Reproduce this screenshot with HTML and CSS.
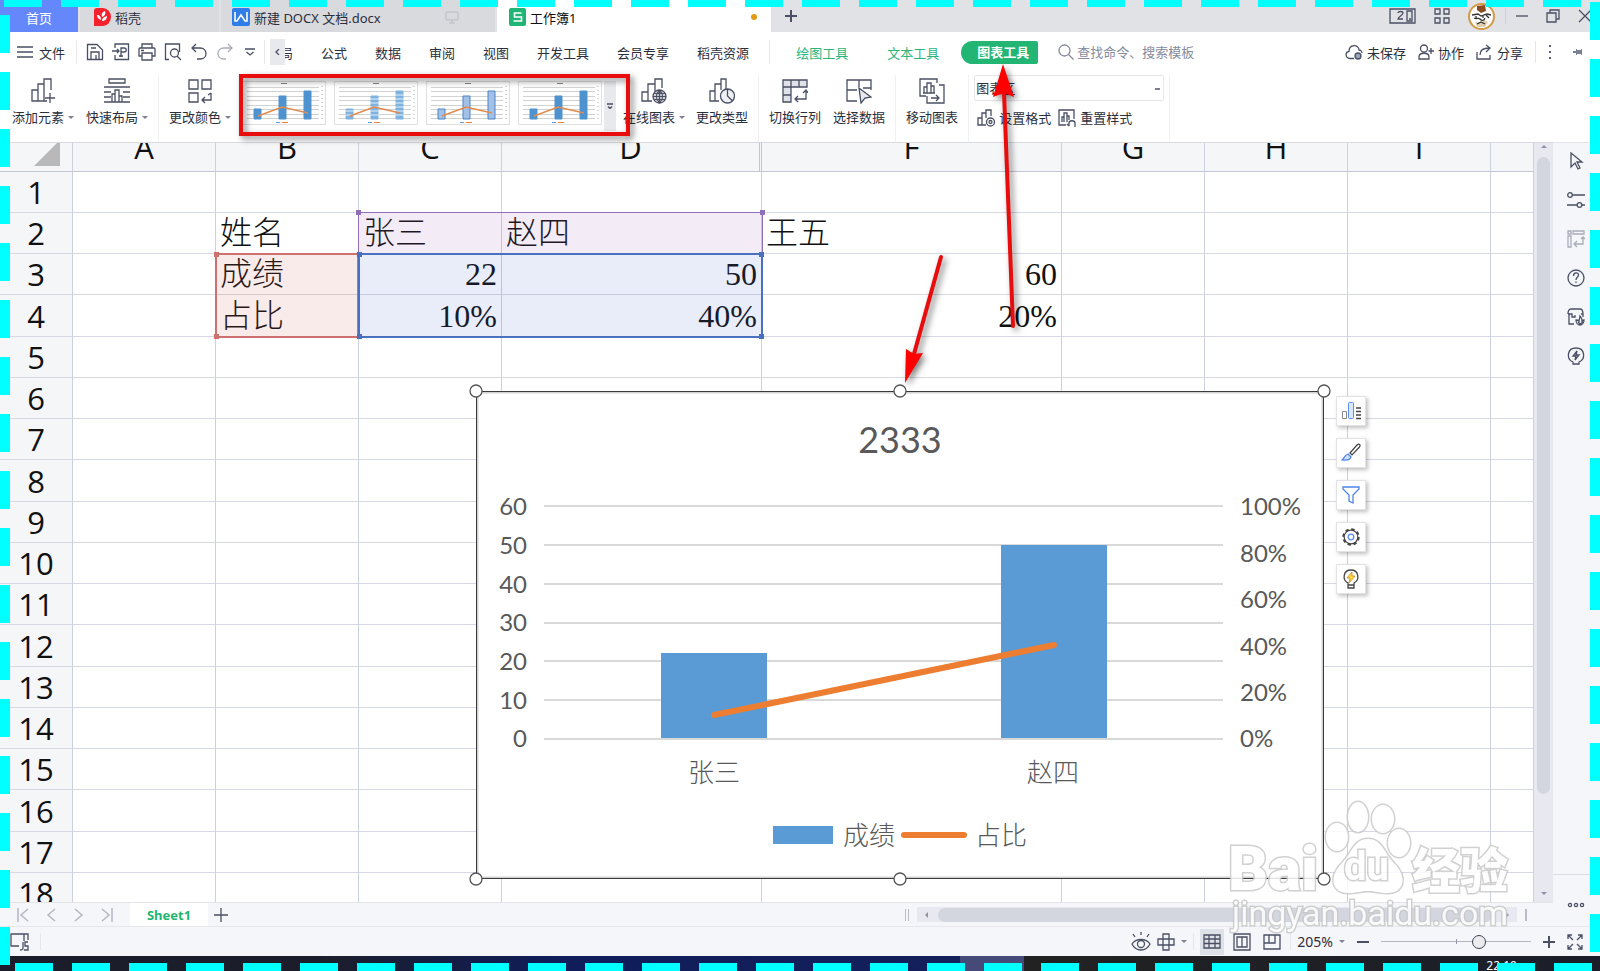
FILE: index.html
```
<!DOCTYPE html>
<html lang="zh-CN">
<head>
  <meta charset="UTF-8" />
  <meta name="viewport" content="width=device-width, initial-scale=1.0" />
  <title>工作簿1</title>
  <link rel="stylesheet" href="styles.css">
</head>
<body>
  <!-- Fönsterflikar -->
  <header class="titlebar">
    <button class="tab home">首页</button>
    <button class="tab docer">
      <svg width="17" height="18" viewBox="0 0 17 18"><path fill="#f5222d" d="M3 0h6a8 9 0 0 1 0 18H0V3a3 3 0 0 1 3-3z"/><path fill="#fff" d="M8 9C7 6 8 4 11 3c1 3 0 5-3 6zM7 12C4 11 3 9 3 7c3 0 4 2 4 5zM8 13c0-3 2-4 5-5 0 3-2 5-5 5z"/></svg>
      稻壳
    </button>
    <button class="tab doc">
      <svg width="18" height="18" viewBox="0 0 18 18"><rect width="18" height="18" rx="2" fill="#2f7de9"/><path fill="none" stroke="#fff" stroke-width="1.6" d="M3 4v9h2l4-6 4 6h2V4"/></svg>
      新建 DOCX 文档.docx
      <svg class="monitor" width="14" height="14" viewBox="0 0 14 14"><path fill="none" stroke="#b9bcc8" d="M1 2h12v8H1zM7 10v3M4 13h6"/></svg>
    </button>
    <button class="tab active">
      <svg width="17" height="18" viewBox="0 0 17 18"><rect width="17" height="18" rx="2" fill="#1fb574"/><path fill="none" stroke="#fff" stroke-width="1.6" d="M12.500 5H5.500v4h7v4h-8"/></svg>
      工作簿1
      <span class="unsaved"></span>
    </button>
    <button class="new-tab" aria-label="新建"><svg class="ic" width="14" height="14" viewBox="0 0 14 14"><path stroke-width="2" d="M7 1v12M1 7h12"/></svg></button>
    <div class="window-tools">
      <button aria-label="窗口"><svg class="ic" width="27" height="16" viewBox="0 0 27 16"><path d="M1 1h25v14H1zM18 3h5v10h-5zM20 11h2M9 5c0-2 5-2 5 0s-5 4-5 6h5"/></svg></button>
      <button aria-label="应用"><svg class="ic" width="16" height="16" viewBox="0 0 16 16"><path d="M1 1h5v5H1zM10 1h5v5h-5zM1 10h5v5H1zM10 10h5v5h-5z"/></svg></button>
      <button aria-label="账户"><svg width="27" height="27" viewBox="0 0 27 27"><circle cx="13.500" cy="13.500" r="12.500" fill="#fff" stroke="#d29a45" stroke-width="2"/><path fill="#8a4a22" d="M9 3l8-1 1 6-5 2-4-3z"/><path fill="#e2cfae" d="M7 19l6 1 3-3 4 2-3 5H9z"/><path fill="none" stroke="#333" stroke-width="1.300" d="M4 12l6-1 3 2 6-2 4 1M6 15c3 2 4-1 6 1s4 2 5-1M9 21l4-2 4 2M18 12l3 3M8 13v2M15 13v2"/></svg></button>
      <span class="sep"></span>
      <button aria-label="最小化"><svg class="ic" width="12" height="12" viewBox="0 0 12 12"><path d="M0 6h12"/></svg></button>
      <button aria-label="还原"><svg class="ic" width="14" height="14" viewBox="0 0 14 14"><path d="M1 4h9v9H1zM4 4V1h9v9h-3"/></svg></button>
      <button aria-label="关闭"><svg class="ic" width="14" height="14" viewBox="0 0 14 14"><path d="M1 1l12 12M13 1L1 13"/></svg></button>
    </div>
  </header>

  <!-- Menyrad -->
  <nav class="menubar">
    <button class="file"><svg class="ic" width="16" height="12" viewBox="0 0 16 12"><path d="M0 1h16M0 6h16M0 11h16"/></svg>文件</button>
    <span class="sep"></span>
    <div class="quick">
      <button aria-label="保存"><svg class="ic" width="18" height="18" viewBox="0 0 18 18"><path d="M2 1.500h9l5.500 5.500v9.500H1.500v-15zM5 16V9h8v7M5 5h5M10 12v4"/></svg></button>
      <button aria-label="输出为PDF"><svg class="ic" width="18" height="18" viewBox="0 0 18 18"><path d="M3 5V1h13.500v15.500H3V12M0 8h7M5 6l2 2-2 2M9 14V5h3c3 0 3 4 0 4H9M7 13h4"/></svg></button>
      <button aria-label="打印"><svg class="ic" width="18" height="18" viewBox="0 0 18 18"><path d="M4 5V1h10v4M4 13H1V6c0-1 0-1 1-1h14c1 0 1 0 1 1v7h-3M4 10h10v7H4zM3 7.500h3"/></svg></button>
      <button aria-label="打印预览"><svg class="ic" width="18" height="18" viewBox="0 0 18 18"><path d="M5 16.500H1.500V1h14v8M13 13l4 4"/><circle cx="10.500" cy="10" r="4"/></svg></button>
      <button aria-label="撤销"><svg class="ic" width="18" height="18" viewBox="0 0 18 18"><path d="M6 1L2 5l4 4M2 5h8c8 0 8 11 0 11H7"/></svg></button>
      <button aria-label="恢复"><svg class="ic pale" width="18" height="18" viewBox="0 0 18 18"><path d="M12 1l4 4-4 4M16 5H8c-8 0-8 11 0 11h2"/></svg></button>
      <button class="quick-more" aria-label="更多"><svg class="ic" width="10" height="10" viewBox="0 0 10 10"><path d="M0 2h10M1.500 5L5 8l3.500-3"/></svg></button>
    </div>
    <span class="sep"></span>
    <button class="scroll-left" aria-label="向左"><svg class="ic" width="6" height="6" viewBox="0 0 6 6"><path d="M4 0L1 3l3 3"/></svg></button>
    <div class="menus">
      <a class="cut" href="#"><span>布局</span></a>
      <a href="#">公式</a>
      <a href="#">数据</a>
      <a href="#">审阅</a>
      <a href="#">视图</a>
      <a href="#">开发工具</a>
      <a href="#">会员专享</a>
      <a href="#">稻壳资源</a>
    </div>
    <span class="sep"></span>
    <div class="context-menus">
      <a href="#">绘图工具</a>
      <a href="#">文本工具</a>
      <a class="current" href="#">图表工具</a>
    </div>
    <label class="search">
      <svg class="ic" width="16" height="16" viewBox="0 0 16 16"><circle cx="6.500" cy="6.500" r="5.500"/><path d="M10.500 10.500l5 5"/></svg>
      <input type="text" placeholder="查找命令、搜索模板" aria-label="查找命令、搜索模板">
    </label>
    <div class="share">
      <button><svg class="ic" width="18" height="16" viewBox="0 0 18 16"><path d="M9 14.500H5C0 14 0 8 4 7.500 4 0 14 0 14 6c2 0 3 2 3 3"/><circle cx="13" cy="12" r="3" fill="#9aa3b8"/></svg>未保存</button>
      <button><svg class="ic" width="16" height="16" viewBox="0 0 16 16"><circle cx="6" cy="4.500" r="3.500"/><path d="M1 15v-2c0-5 10-5 10 0v2zM13 4v6M10.500 7H16"/></svg>协作</button>
      <button><svg class="ic" width="17" height="16" viewBox="0 0 17 16"><path d="M1 8v7h13v-4M4 11c0-5 3-7 9-7M10 1l4 3-4 4"/></svg>分享</button>
      <span class="sep"></span>
      <button aria-label="更多"><svg width="4" height="14" viewBox="0 0 4 14" fill="#5b6073"><path d="M1 0h2v2H1zM1 6h2v2H1zM1 12h2v2H1z"/></svg></button>
      <button aria-label="固定"><svg width="10" height="8" viewBox="0 0 10 8" fill="#7c8091"><path d="M0 3h3V1h1v1h4V1h1v6H8V6H4v1H3V5H0z"/></svg></button>
    </div>
  </nav>

  <!-- Verktygsfält -->
  <section class="ribbon">
    <button class="tool"><svg class="ic" width="26" height="26" viewBox="0 0 26 26"><path d="M17 23H2V12h6v11M8 12V6h6v17M14 6V1h7v11M20 15v10M15 20h10"/></svg><span class="drop">添加元素</span></button>
    <button class="tool gap"><svg class="ic" width="26" height="26" viewBox="0 0 26 26"><path d="M5 1h16v4H5zM0 9h26M0 14h7M19 14h7M0 19h7M19 19h7M0 24h26M8 24v-8h3v8M11 24V12h4v12M15 24v-6h3v6"/></svg><span class="drop">快速布局</span></button>
    <span class="sep"></span>
    <button class="tool"><svg class="ic" width="26" height="26" viewBox="0 0 26 26"><path d="M2 2h9v9H2zM15 2h9v9h-9zM2 15h9v9H2zM24 15v7h-9M18 19l-3 3 3 3M21 17l3-2"/></svg><span class="drop">更改颜色</span></button>

    <svg class="defs">
      <symbol id="thumb" viewBox="0 0 84 44">
        <rect x=".5" y=".5" width="83" height="43" fill="#fff" stroke="#e0e0e3"/>
        <path stroke="#d2d2d2" d="M5 6.500h72M5 10.500h72M5 15.500h72M5 19.500h72M5 24.500h72M5 28.500h72M5 33.500h72M5 37.500h72"/>
        <path stroke="#aaa" stroke-dasharray="1 3" d="M80 5v34"/>
        <path stroke="#888" d="M39 2.500h6"/>
        <path class="bars" d="M12 28h7v10h-7zM37 15h7v23h-7zM62 10h7v28h-7z"/>
        <path class="stripes" d="M11 30h9M11 34h9M36 18h9M36 22h9M36 26h9M36 30h9M36 34h9M61 14h9M61 18h9M61 22h9M61 26h9M61 30h9M61 34h9"/>
        <path fill="none" stroke="#e28b4f" stroke-width="1.500" d="M16 35l24-9 26 6"/>
        <path stroke="#5b9bd5" d="M34 41.500h4"/><path stroke="#ed7d31" d="M40 41.500h6"/>
      </symbol>
    </svg>
    <div class="gallery">
      <button aria-label="样式 1"><svg class="s1" width="84" height="44"><use href="#thumb"/></svg></button>
      <button aria-label="样式 2"><svg class="s2" width="84" height="44"><use href="#thumb"/></svg></button>
      <button aria-label="样式 3"><svg class="s3" width="84" height="44"><use href="#thumb"/></svg></button>
      <button aria-label="样式 4"><svg class="s1" width="84" height="44"><use href="#thumb"/></svg></button>
      <button class="more" aria-label="更多样式"><svg class="ic" width="6" height="6" viewBox="0 0 6 6"><path d="M0 1h6M1 3.500l2 2 2-2"/></svg></button>
    </div>

    <button class="tool online"><svg class="ic" width="26" height="26" viewBox="0 0 26 26"><path d="M11 23H1V14h6v9M7 14V6h7v8M14 6V1h7v9"/><circle cx="18.500" cy="18.500" r="6.500"/><path d="M12 18.500h13M18.500 12v13M18.500 12c-4 4-4 9 0 13M18.500 12c4 4 4 9 0 13M13 15.500h11M13 21.500h11"/></svg><span class="drop">在线图表</span></button>
    <button class="tool type"><svg class="ic" width="26" height="26" viewBox="0 0 26 26"><path d="M10 23H1V13h5v10M6 13V6h6v6M12 6V1h5v10"/><circle cx="18.500" cy="18" r="7" fill="#eef0f3"/><path d="M18.500 11v7l5 5"/></svg><span>更改类型</span></button>
    <span class="sep"></span>
    <button class="tool near"><svg class="ic" width="26" height="26" viewBox="0 0 26 26"><path fill="#dfe2e8" d="M1 2h24v7H9v15H1z"/><path d="M9 2v7M17 2v7M1 9h8M1 17h8M24 12v9H13M16 18l-3 3 3 3M21 15l3-3 2 3"/></svg><span>切换行列</span></button>
    <button class="tool gap"><svg class="ic" width="26" height="26" viewBox="0 0 26 26"><path d="M11 23H1V2h24v10M1 12h10M13 2v7M17 10h8"/><path fill="#e6e8ec" d="M13 10l12 9-6 1-4 5z"/></svg><span>选择数据</span></button>
    <span class="sep"></span>
    <button class="tool near"><svg class="ic" width="26" height="26" viewBox="0 0 26 26"><path d="M7 18H1V1h17v4M20 7h5v18H8v-7"/><path d="M5 15V9h3v6M8 15V5h4v10M12 15V8h3v7M4 15h12M12 20h8M17 17l3 3-3 3"/></svg><span>移动图表</span></button>
    <span class="sep"></span>
    <div class="format">
      <select aria-label="图表元素"><option>图表区</option></select>
      <div class="format-row">
        <button><svg class="ic" width="18" height="18" viewBox="0 0 18 18"><path d="M9 16H1V9h4v7M5 9V4h4v5M9 4V1h5v6"/><circle cx="13.500" cy="13" r="4"/><circle cx="13.500" cy="13" r="1.500"/></svg>设置格式</button>
        <button><svg class="ic" width="18" height="18" viewBox="0 0 18 18"><path d="M8 16H1V1h15v9M4 13V8h2v5M6 13V4h3v9M9 13V7h2v4M11 17v-3c0-3 6-3 6 0v4M9 15l2 2"/></svg>重置样式</button>
      </div>
    </div>
    <span class="sep"></span>
  </section>

  <main class="workspace">
    <div class="book">
      <div class="sheet-area">
        <div class="sheet">
          <table class="grid">
            <colgroup><col class="nums"><col class="std"><col class="std"><col class="std"><col class="wide-d"><col class="wide-f"><col class="std"><col class="std"><col class="std"><col></colgroup>
            <thead>
              <tr><th class="corner"><i></i></th><th>A</th><th>B</th><th>C</th><th class="before-hidden">D</th><th>F</th><th>G</th><th>H</th><th>I</th><th></th></tr>
            </thead>
            <tbody>
              <tr><th>1</th><td></td><td></td><td></td><td></td><td></td><td></td><td></td><td></td><td></td></tr>
              <tr><th>2</th><td></td><td>姓名</td><td>张三</td><td>赵四</td><td>王五</td><td></td><td></td><td></td><td></td></tr>
              <tr><th>3</th><td></td><td>成绩</td><td class="num">22</td><td class="num">50</td><td class="num">60</td><td></td><td></td><td></td><td></td></tr>
              <tr><th>4</th><td></td><td>占比</td><td class="num">10%</td><td class="num">40%</td><td class="num">20%</td><td></td><td></td><td></td><td></td></tr>
              <tr><th>5</th><td></td><td></td><td></td><td></td><td></td><td></td><td></td><td></td><td></td></tr>
              <tr><th>6</th><td></td><td></td><td></td><td></td><td></td><td></td><td></td><td></td><td></td></tr>
              <tr><th>7</th><td></td><td></td><td></td><td></td><td></td><td></td><td></td><td></td><td></td></tr>
              <tr><th>8</th><td></td><td></td><td></td><td></td><td></td><td></td><td></td><td></td><td></td></tr>
              <tr><th>9</th><td></td><td></td><td></td><td></td><td></td><td></td><td></td><td></td><td></td></tr>
              <tr><th>10</th><td></td><td></td><td></td><td></td><td></td><td></td><td></td><td></td><td></td></tr>
              <tr><th>11</th><td></td><td></td><td></td><td></td><td></td><td></td><td></td><td></td><td></td></tr>
              <tr><th>12</th><td></td><td></td><td></td><td></td><td></td><td></td><td></td><td></td><td></td></tr>
              <tr><th>13</th><td></td><td></td><td></td><td></td><td></td><td></td><td></td><td></td><td></td></tr>
              <tr><th>14</th><td></td><td></td><td></td><td></td><td></td><td></td><td></td><td></td><td></td></tr>
              <tr><th>15</th><td></td><td></td><td></td><td></td><td></td><td></td><td></td><td></td><td></td></tr>
              <tr><th>16</th><td></td><td></td><td></td><td></td><td></td><td></td><td></td><td></td><td></td></tr>
              <tr><th>17</th><td></td><td></td><td></td><td></td><td></td><td></td><td></td><td></td><td></td></tr>
              <tr><th>18</th><td></td><td></td><td></td><td></td><td></td><td></td><td></td><td></td><td></td></tr>
            </tbody>
          </table>

          <!-- Markerade dataområden -->
          <div class="range names"><i></i><i></i></div>
          <div class="range labels"><i></i><i></i></div>
          <div class="range values"><i></i><i></i><i></i><i></i></div>

          <!-- Diagram -->
          <svg class="chart" width="864" height="504" viewBox="-8 -8 864 504">
            <rect width="848" height="488" fill="#fff"/>
            <rect x="1.500" y="1.500" width="845" height="485" fill="none" stroke="#d2d2d2" stroke-width="2"/>
            <rect x=".5" y=".5" width="847" height="487" fill="none" stroke="#3a3a3a"/>
            <text class="chart-title" x="424" y="62" text-anchor="middle">2333</text>
            <path stroke="#d9d9d9" stroke-width="2" d="M68 115h679M68 154h679M68 193h679M68 232h679M68 270h679M68 309h679M68 348h679"/>
            <g text-anchor="end">
              <text x="51" y="124">60</text>
              <text x="51" y="163">50</text>
              <text x="51" y="202">40</text>
              <text x="51" y="240">30</text>
              <text x="51" y="279">20</text>
              <text x="51" y="318">10</text>
              <text x="51" y="356">0</text>
            </g>
            <g>
              <text x="764" y="124">100%</text>
              <text x="764" y="171">80%</text>
              <text x="764" y="217">60%</text>
              <text x="764" y="264">40%</text>
              <text x="764" y="310">20%</text>
              <text x="764" y="356">0%</text>
            </g>
            <path fill="#5b9bd5" d="M185 262h106v85H185zM525 154h106v193H525z"/>
            <path stroke="#ed7d31" stroke-width="6" stroke-linecap="round" d="M238 324L578 254"/>
            <text class="cn" x="238" y="391" text-anchor="middle">张三</text>
            <text class="cn" x="577" y="391" text-anchor="middle">赵四</text>
            <path fill="#5b9bd5" d="M297 435h60v18h-60z"/>
            <text class="cn" x="367" y="454">成绩</text>
            <path stroke="#ed7d31" stroke-width="6" stroke-linecap="round" d="M428 444h60"/>
            <text class="cn" x="499" y="454">占比</text>
            <g fill="#fff" stroke="#555" stroke-width="1.300">
              <circle r="6"/><circle cx="424" r="6"/><circle cx="848" r="6"/>
              <circle cy="488" r="6"/><circle cx="424" cy="488" r="6"/><circle cx="848" cy="488" r="6"/>
            </g>
          </svg>

          <div class="chart-tools">
            <button aria-label="图表元素"><svg width="20" height="20" viewBox="0 0 20 20"><path fill="none" stroke="#8a8a8a" d="M1.500 10.500h4v7h-4z"/><rect x="7.500" y="1.500" width="5" height="16" rx="1" fill="#dbe8fc" stroke="#5b8def"/><path stroke="#444" stroke-width="1.300" d="M15 7h5M15 10.500h5M15 14h5M15 17.500h5"/></svg></button>
            <button aria-label="图表样式"><svg width="20" height="20" viewBox="0 0 20 20"><path fill="#fff" stroke="#444" stroke-width="1.200" d="M9 10l7-8c2-2 4 0 2.500 2L11 12z"/><path fill="#cfe0fb" stroke="#4f84e8" stroke-width="1.200" d="M1 17c3-2 2-5 6-6l3 3c-1 4-6 3-9 3z"/></svg></button>
            <button aria-label="图表筛选器"><svg width="20" height="20" viewBox="0 0 20 20"><path fill="#fff" stroke="#4f84e8" stroke-width="1.300" d="M2 2h16v2l-6 6v8l-4-2v-6L2 4z"/></svg></button>
            <button aria-label="设置"><svg width="20" height="20" viewBox="0 0 20 20"><circle cx="10" cy="10" r="7.500" fill="none" stroke="#444" stroke-width="2.400" stroke-dasharray="3.300 2.590"/><circle cx="10" cy="10" r="6.800" fill="#fff" stroke="#444" stroke-width="1.200"/><circle cx="10" cy="10" r="2.800" fill="#fff" stroke="#5b8def" stroke-width="1.300"/></svg></button>
            <button aria-label="智能推荐"><svg width="20" height="20" viewBox="0 0 20 20"><path fill="#fff" stroke="#444" stroke-width="1.300" d="M7 16v-2C1 11 2 1 10 1s9 10 3 13v2zM7 19h6v-3H7z"/><path fill="#ffd54a" stroke="#c98a10" stroke-width=".8" d="M11 3l-5 6h3l-1 5 6-7h-3z"/></svg></button>
          </div>
        </div>
        <div class="vscroll"><i class="up"></i><span></span><i class="down"></i></div>
      </div>

      <div class="sheet-bar">
        <div class="sheet-nav">
          <button aria-label="第一个"><svg width="12" height="14" viewBox="0 0 12 14"><path d="M1 0v14M11 1L4 7l7 6"/></svg></button>
          <button aria-label="上一个"><svg width="12" height="14" viewBox="0 0 12 14"><path d="M10 1L3 7l7 6"/></svg></button>
          <button aria-label="下一个"><svg width="12" height="14" viewBox="0 0 12 14"><path d="M2 1l7 6-7 6"/></svg></button>
          <button aria-label="最后一个"><svg width="12" height="14" viewBox="0 0 12 14"><path d="M1 1l7 6-7 6M11 0v14"/></svg></button>
        </div>
        <button class="sheet-tab">Sheet1</button>
        <button class="add-sheet" aria-label="新建工作表"><svg class="ic" width="14" height="14" viewBox="0 0 14 14"><path d="M7 0v14M0 7h14"/></svg></button>
        <i class="splitter"></i>
        <div class="hscroll"><i class="left"></i><span></span><i class="right"></i></div>
        <i class="splitter end"></i>
      </div>
    </div>

    <aside class="sidebar">
      <button aria-label="选择"><svg class="ic" width="18" height="18" viewBox="0 0 18 18"><path d="M4 1v14l4-4 3 6 2-1-3-6h5z"/></svg></button>
      <button aria-label="属性"><svg class="ic" width="18" height="18" viewBox="0 0 18 18"><circle cx="3" cy="4" r="2.300"/><path d="M5.500 4H18M0 14h10M15 14h3"/><circle cx="12.500" cy="14" r="2.300"/></svg></button>
      <button aria-label="透视表"><svg class="ic pale" width="18" height="18" viewBox="0 0 18 18"><path d="M1 1h3v3H1zM6 1h11v3H6zM1 6h3v11H1zM16 7v7H8M10 11l-3 3 3 3M14 9l2-2 2 2"/></svg></button>
      <button aria-label="帮助"><svg class="ic" width="18" height="18" viewBox="0 0 18 18"><circle cx="9" cy="9" r="8"/><path d="M6.500 7c0-4 5-4 5-1 0 2-2.500 2-2.500 5M9 12.500V14"/></svg></button>
      <button aria-label="资源"><svg class="ic" width="18" height="18" viewBox="0 0 18 18"><path d="M1 6c0-3 1-5 3-5h9c2 0 3 2 3 5M1 6h4v3h3V7M2 6v10h5M14 6h2v3"/><path d="M13 8c0 3-1 3-1 5-1-1-3-1-3-1 0 3 2 5 4 5s4-2 4-5c-1 0-2 1-2 1s0-3-2-5zM11 14l2 2 3-2"/></svg></button>
      <button aria-label="灵感"><svg class="ic" width="18" height="18" viewBox="0 0 18 18"><path d="M6 15c-7-3-6-14 3-14s10 11 3 14v2H6zM10 4l-4 5h3l-1 4 4-5H9z"/></svg></button>
      <button class="dots" aria-label="更多"><svg class="ic" width="18" height="6" viewBox="0 0 18 6"><circle cx="3" cy="3" r="1.600"/><circle cx="9" cy="3" r="1.600"/><circle cx="15" cy="3" r="1.600"/></svg></button>
    </aside>
  </main>

  <footer class="statusbar">
    <button aria-label="JS宏"><svg class="ic" width="20" height="18" viewBox="0 0 20 18"><path d="M9 13H1V1h17v6M14 1v7M13 9v6c0 2-1 2-3 2M18 9h-3v4h3v4h-4"/></svg></button>
    <span class="sep"></span>
    <div class="status-right">
      <button aria-label="护眼模式"><svg class="ic" width="20" height="20" viewBox="0 0 20 20"><path d="M1 12c4-6 14-6 18 0-4 8-14 8-18 0zM10 0v3M2 2l2 3M18 2l-2 3"/><circle cx="10" cy="12" r="3.500"/></svg></button>
      <button aria-label="阅读模式"><svg class="ic" width="18" height="18" viewBox="0 0 18 18"><path d="M6 1h6v16H6zM1 6h16v6H1z"/></svg></button>
      <i class="caret"></i>
      <span class="sep"></span>
      <button class="view on" aria-label="普通视图"><svg class="ic" width="18" height="16" viewBox="0 0 18 16"><path d="M1 1h16v13H1zM1 5h16M1 9.500h16M6 1v13M12 1v13"/></svg></button>
      <button class="view" aria-label="页面布局"><svg class="ic" width="18" height="18" viewBox="0 0 18 18"><path d="M1 1h16v16H1zM4 4h5v10H4zM9 4h5v10H9z"/></svg></button>
      <button class="view" aria-label="分页预览"><svg class="ic" width="18" height="16" viewBox="0 0 18 16"><path d="M1 1h16v14H1zM6 1v8M1 9h11V1"/></svg></button>
      <span class="sep"></span>
      <button class="percent">205%<i class="caret"></i></button>
      <button aria-label="缩小"><svg class="ic" width="12" height="12" viewBox="0 0 12 12"><path stroke-width="2" d="M0 6h12"/></svg></button>
      <input type="range" min="0" max="100" value="67" aria-label="缩放">
      <button aria-label="放大"><svg class="ic" width="12" height="12" viewBox="0 0 12 12"><path stroke-width="2" d="M0 6h12M6 0v12"/></svg></button>
      <button aria-label="全屏"><svg class="ic" width="16" height="16" viewBox="0 0 16 16"><path d="M1 5V1h4M1 1l5 5M11 1h4v4M15 1l-5 5M1 11v4h4M1 15l5-5M15 11v4h-4M15 15l-5-5"/></svg></button>
    </div>
  </footer>
  <div class="taskbar"><span class="clock">22:19</span></div>

  <!-- Vattenstämpel -->
  <svg class="watermark" width="300" height="140" viewBox="0 0 300 140">
    <g fill="#fff" stroke="#c9c9c9" stroke-width="3" paint-order="stroke">
      <text class="wm-big" x="4" y="91">Bai</text>
      <ellipse cx="113" cy="38" rx="11" ry="14"/>
      <ellipse cx="134" cy="18" rx="10" ry="15"/>
      <ellipse cx="159" cy="20" rx="11" ry="14"/>
      <ellipse cx="175" cy="44" rx="11" ry="14"/>
      <path d="M144 40c14 0 16 14 26 24 14 14 10 30-6 30-10 0-12-2-20-2s-10 2-20 2c-16 0-20-16-6-30 10-10 12-24 26-24z"/>
      <text class="wm-du" x="120" y="81">du</text>
      <text class="wm-cn" x="188" y="89">经验</text>
      <text class="wm-url" x="8" y="126">jingyan.baidu.com</text>
    </g>
  </svg>

  <!-- Röda markeringar -->
  <svg class="marks" width="1040" height="400" viewBox="0 0 1040 400">
    <rect x="241" y="76" width="387" height="58" fill="none" stroke="#e80c0c" stroke-width="4"/>
    <path stroke="#e80c0c" stroke-width="4" stroke-linecap="round" d="M1013 326L1004 92M941 257L914 354"/>
    <path fill="#f00" d="M1003 64l11 33-10-4-11 4zM905 383l1-34 8 5 9-1z"/>
  </svg>
</body>
</html>
```
FILE: styles.css
```
* {
  box-sizing: border-box;
}

body {
  margin: 0;
  height: 100vh;
  position: relative;
  display: flex;
  flex-direction: column;
  overflow: hidden;
  background: #fff;
  color: #2b2f3c;
  font-family: "Noto Sans", "Noto Sans CJK SC", sans-serif;
  font-size: 13px;
}

/* streckad ram runt hela fönstret */
body::after {
  content: "";
  position: absolute;
  inset: 0;
  z-index: 10;
  pointer-events: none;
  background:
    linear-gradient(90deg, #0ff 38px, transparent 38px) 4px 0 / 57px 7px repeat-x,
    linear-gradient(90deg, #0ff 38px, transparent 38px) 15px 100% / 57px 8px repeat-x,
    linear-gradient(#0ff 38px, transparent 38px) 0 15px / 10px 57px repeat-y,
    linear-gradient(#0ff 38px, transparent 38px) 100% 2px / 10px 57px repeat-y;
}

button {
  display: flex;
  align-items: center;
  padding: 0;
  border: none;
  background: none;
  color: inherit;
  font: inherit;
  white-space: nowrap;
}

a {
  color: inherit;
  text-decoration: none;
  white-space: nowrap;
}

svg {
  display: block;
  flex: none;
}

.ic {
  fill: none;
  stroke: #4a4f63;
  stroke-width: 1.3;
}

.ic.pale { stroke: #a9adb8; }

.defs {
  width: 0;
  height: 0;
}

.sep {
  width: 1px;
  align-self: stretch;
  background: #e6e7eb;
}

/* Titelrad */
.titlebar {
  display: flex;
  height: 32px;
  flex: none;
  background: #e1e2e6;
}

.tab {
  gap: 4px;
  padding: 2px 10px 0;
  background: #d9dade;
  border-right: 2px solid #e1e2e6;
}

.home {
  width: 80px;
  justify-content: center;
  background: #6488fc;
  color: #fff;
}

.docer { width: 141px; padding-left: 14px; }
.doc { width: 276px; padding-left: 11px; }
.doc .monitor { margin: 0 26px 0 auto; }

.tab.active {
  width: 274px;
  padding-left: 12px;
  background: #fff;
  border: none;
  color: #111;
}

.unsaved {
  width: 6px;
  height: 6px;
  margin: 0 4px 0 auto;
  border-radius: 50%;
  background: #e09a14;
}

.new-tab { padding: 0 13px; }

.window-tools {
  display: flex;
  align-items: center;
  gap: 18px;
  margin-left: auto;
  padding-right: 8px;
}

.window-tools .sep {
  margin: 8px -8px;
  background: #cfd0d6;
}

/* Menyrad */
.menubar {
  display: flex;
  align-items: center;
  height: 40px;
  flex: none;
  padding: 0 17px;
}

.menubar .sep { margin: 8px 0; }

.file {
  gap: 6px;
  margin-right: 11px;
}

.quick {
  display: flex;
  align-items: center;
  gap: 8px;
  padding: 0 9px;
}

.quick-more { margin-left: 3px; }

.quick + .sep { margin-right: 5px; }

.scroll-left {
  width: 15px;
  height: 26px;
  justify-content: center;
  background: #e8e9ed;
}

.menus {
  display: flex;
  gap: 28px;
  margin-right: 20px;
}

.menus .cut {
  display: flex;
  justify-content: flex-end;
  width: 8px;
  overflow: hidden;
}

.context-menus {
  display: flex;
  align-items: center;
  margin-left: 26px;
  color: #2db67c;
}

.context-menus a { margin-right: 39px; }

.context-menus .current {
  margin: 0 20px 0 -17px;
  padding: 0 9px 0 16px;
  line-height: 23px;
  border-radius: 12px 2px 2px 12px;
  background: #22b573;
  color: #fff;
  font-weight: bold;
}

.search {
  display: flex;
  align-items: center;
  gap: 3px;
}

.search .ic { stroke: #858b9d; }

.search input {
  width: 150px;
  padding: 0;
  border: none;
  outline: none;
  background: none;
  font: inherit;
}

.search input::placeholder { color: #858b9d; }

.share {
  display: flex;
  align-items: center;
  gap: 12px;
  margin-left: auto;
}

.share button { gap: 4px; }
.share .sep { margin: 8px 0; height: 22px; }
.share button:last-child { margin-left: 9px; }

/* Verktygsfält */
.ribbon {
  display: flex;
  height: 70px;
  flex: none;
  padding: 3px 12px 0;
}

.ribbon .sep {
  margin: 0 10px;
  background: #f0f1f3;
}

.tool {
  flex-direction: column;
  align-items: center;
  gap: 4px;
  padding-top: 3px;
  line-height: 18px;
}

.tool.gap { margin-left: 12px; }
.tool.online { margin-left: 7px; }
.tool.type { margin-left: 11px; }

.drop {
  display: flex;
  align-items: center;
  gap: 4px;
}

.drop::after,
.caret {
  content: "";
  border: 3px solid transparent;
  border-top-color: #7c8091;
  border-bottom: none;
}

.gallery {
  display: flex;
  align-items: flex-start;
  gap: 8px;
  width: 374px;
  height: 57px;
  margin-left: 11px;
  padding-top: 6px;
}

.bars {
  fill: var(--bar);
  stroke: var(--edge);
}

.stripes { stroke: var(--stripe, none); }

.s1 { --bar: #4e93d0; --edge: #4e93d0; }
.s2 { --bar: #7fb2df; --edge: #7fb2df; --stripe: #e3effa; }
.s3 { --bar: #a3c0e6; --edge: #4a83c6; }

.gallery .more {
  width: 13px;
  height: 50px;
  margin-left: -6px;
  justify-content: center;
  background: #e8e9ed;
}

.format { margin-left: -5px; }

.format select {
  display: block;
  width: 190px;
  height: 26px;
  appearance: none;
  padding: 0 1px;
  border: 1px solid #e6e7eb;
  border-radius: 2px;
  background: linear-gradient(#7c8091, #7c8091) 180px 12px / 5px 2px no-repeat #fff;
  color: inherit;
  font: inherit;
}

.format-row {
  display: flex;
  gap: 7px;
  padding: 7px 3px;
}

.format-row button { gap: 4px; }
.format + .sep { margin-left: 5px; }

/* Arbetsyta */
.workspace {
  display: flex;
  flex: 1;
  min-height: 0;
}

.book {
  display: flex;
  flex-direction: column;
  flex: 1;
  min-width: 0;
}

.sheet-area {
  display: flex;
  flex: 1;
  min-height: 0;
  border-top: 1px solid #d9dadd;
}

.sheet {
  position: relative;
  flex: 1;
  min-width: 0;
  overflow: hidden;
}

.grid {
  width: 100%;
  margin-top: -20px;
  table-layout: fixed;
  border-collapse: separate;
  border-spacing: 0;
}

.nums { width: 73px; }
.std { width: 143px; }
.wide-d { width: 260px; }
.wide-f { width: 300px; }

.grid th,
.grid td {
  height: 41px;
  padding: 0 4px;
  border-right: 1px solid #cdd0de;
  border-bottom: 1px solid #d6d8e3;
  line-height: 40px;
  white-space: nowrap;
}

.grid th {
  padding: 0;
  background: #f5f6f8;
  color: #111;
  font-family: "Open Sans", sans-serif;
  font-size: 31px;
  font-weight: normal;
}

.grid thead th {
  height: 49px;
  border-bottom-color: #c3c6d6;
}

.grid tbody tr:nth-child(4n) td { height: 42px; }

.grid .before-hidden { border-right: 3px double #c3c6d6; }

.corner i {
  float: right;
  margin: 11px 12px 0 0;
  border: 13px solid transparent;
  border-right-color: #b9b9b9;
  border-bottom-color: #b9b9b9;
}

.grid td {
  color: #111;
  font-family: "Liberation Serif", "Noto Sans CJK SC", serif;
  font-size: 32px;
  font-weight: 300;
  vertical-align: bottom;
}

.grid .num { text-align: right; }

.range {
  position: absolute;
  border: 2px solid;
}

.range i {
  position: absolute;
  width: 5px;
  height: 5px;
  background: currentColor;
}

.range i:nth-child(1) { left: -3px; top: -3px; }
.range i:nth-child(2) { right: -3px; top: -3px; }
.range i:nth-child(3) { left: -3px; bottom: -3px; }
.range i:nth-child(4) { right: -3px; bottom: -3px; }
.labels i:nth-child(2) { right: auto; left: -3px; top: auto; bottom: -3px; }

.names {
  left: 358px;
  top: 69px;
  width: 405px;
  height: 43px;
  color: #8f6fb8;
  background: rgba(143, 80, 180, .11);
  border-width: 1px;
  border-bottom: none;
}

.labels {
  left: 215px;
  top: 110px;
  width: 144px;
  height: 85px;
  color: #cf7070;
  background: rgba(215, 90, 90, .12);
}

.values {
  left: 358px;
  top: 110px;
  width: 405px;
  height: 85px;
  color: #4a70c0;
  background: rgba(70, 110, 215, .12);
}

.chart {
  position: absolute;
  left: 468px;
  top: 240px;
  font-family: Lato, "Noto Sans CJK SC", sans-serif;
  font-size: 24px;
  fill: #595959;
}

.chart-title { font-size: 36px; }

.chart .cn {
  font-size: 26px;
  font-weight: 300;
}

.chart-tools {
  position: absolute;
  left: 1336px;
  top: 253px;
  display: flex;
  flex-direction: column;
  gap: 12px;
}

.chart-tools button {
  width: 30px;
  height: 30px;
  justify-content: center;
  border: 1px solid #e3e3e6;
  background: #fff;
  box-shadow: 2px 2px 4px rgba(0, 0, 0, .25);
}

.vscroll {
  display: flex;
  flex-direction: column;
  align-items: center;
  justify-content: space-between;
  width: 19px;
  padding: 2px 3px 7px;
  background: #e8e9f0;
}

.vscroll span {
  flex: 1;
  width: 13px;
  margin: 9px 0 98px;
  border-radius: 7px;
  background: #d3d6df;
}

.vscroll i,
.hscroll i {
  border: 3px solid transparent;
}

.vscroll .up { border-bottom-color: #8d93a8; border-top: none; }
.vscroll .down { border-top-color: #8d93a8; border-bottom: none; }

.sheet-bar {
  display: flex;
  align-items: center;
  height: 24px;
  flex: none;
  padding: 0 26px 0 17px;
  background: #f5f6f9;
  border-top: 1px solid #e3e4e8;
}

.sheet-nav {
  display: flex;
  gap: 16px;
  margin-right: 17px;
  fill: none;
  stroke: #b4b7c2;
  stroke-width: 1.5;
}

.sheet-tab {
  width: 78px;
  height: 24px;
  justify-content: center;
  background: #fff;
  color: #22b573;
  font-weight: bold;
}

.add-sheet { margin-left: 6px; }

.splitter {
  width: 4px;
  height: 12px;
  margin: 0 8px 0 auto;
  border: solid #b9bcc8;
  border-width: 0 1px;
}

.splitter.end {
  width: 2px;
  margin: 0 0 0 8px;
}

.hscroll {
  display: flex;
  align-items: center;
  width: 600px;
  height: 15px;
  padding: 0 8px;
  background: #e8e9f0;
}

.hscroll span {
  flex: 1;
  height: 14px;
  margin: 0 14px 0 10px;
  border-radius: 7px;
  background: #d3d6df;
}

.hscroll .left { border-right-color: #8d93a8; border-left: none; }
.hscroll .right { border-left-color: #8d93a8; border-right: none; }

.sidebar {
  display: flex;
  flex-direction: column;
  align-items: center;
  gap: 21px;
  width: 47px;
  padding: 9px 2px 18px 0;
  background: #f5f6f9;
  border-top: 1px solid #e3e4e8;
}

.sidebar .dots {
  width: 45px;
  margin-top: auto;
  padding-top: 27px;
  justify-content: center;
  border-top: 1px solid #dcdde3;
}

/* Statusrad */
.statusbar {
  display: flex;
  align-items: center;
  height: 30px;
  flex: none;
  padding: 0 17px 0 10px;
  background: #f5f6f9;
  border-top: 1px solid #e6e7eb;
}

.statusbar .sep { margin: 6px 10px; }

.status-right {
  display: flex;
  align-items: center;
  align-self: stretch;
  gap: 6px;
  margin-left: auto;
}

.status-right .sep { margin: 6px 0; }

.view {
  width: 24px;
  height: 26px;
  justify-content: center;
}

.view.on { background: #dfe1e8; }

.percent {
  gap: 6px;
  margin-right: 6px;
  font-size: 14px;
}

.statusbar input {
  width: 150px;
  height: 16px;
  margin: 0 6px;
  appearance: none;
  background:
    linear-gradient(#9499aa, #9499aa) 75px 50% / 1px 5px no-repeat,
    linear-gradient(#b4b7c2, #b4b7c2) 0 50% / 100% 1px no-repeat;
}

.statusbar input::-webkit-slider-thumb {
  appearance: none;
  width: 14px;
  height: 14px;
  border: 1px solid #3f4350;
  border-radius: 50%;
  background: #ececef;
}

.status-right button:last-child { margin-left: 6px; }

.taskbar {
  display: flex;
  justify-content: flex-end;
  height: 15px;
  flex: none;
  padding-right: 83px;
  overflow: hidden;
  background: linear-gradient(90deg, #1b1e2a 20%, #0f1d5a 35%, #14205a 60%, #454a78 60%, #454a78 64%, #222 64%, #1b1e2a);
  color: #fff;
}

.clock {
  font-size: 12px;
  line-height: 20px;
}

/* Lager ovanpå */
.watermark {
  position: absolute;
  right: 76px;
  bottom: 32px;
  font-family: Roboto, "Noto Sans CJK SC", sans-serif;
  opacity: .85;
}

.wm-big { font-size: 62px; font-weight: 900; }
.wm-du { font-size: 40px; font-weight: bold; }
.wm-cn { font-size: 48px; font-weight: 900; }
.wm-url { font-size: 34px; }

.marks {
  position: absolute;
  left: 0;
  top: 0;
  pointer-events: none;
  filter: drop-shadow(3px 3px 3px rgba(0, 0, 0, .5));
}
```
